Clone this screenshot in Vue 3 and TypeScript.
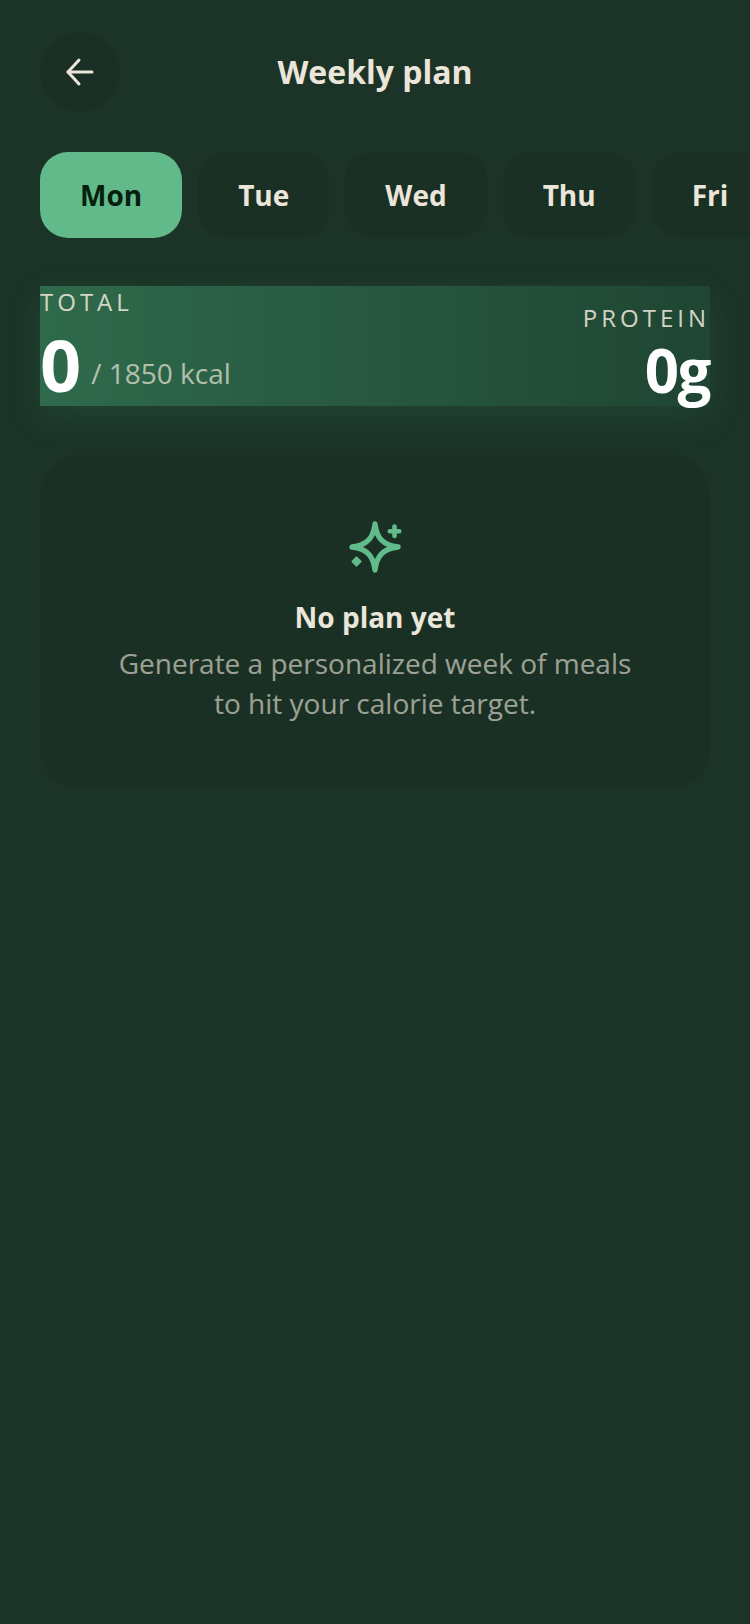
<template>
  <div class="page">
    <header class="top">
      <button class="back" aria-label="Back">
        <svg width="32" height="32" viewBox="0 0 32 32" fill="none" stroke="#ebe6d9" stroke-width="3" stroke-linecap="round" stroke-linejoin="round">
          <path d="M28 16H4" />
          <path d="M15 4 4 16l11 12" />
        </svg>
      </button>
      <h1>Weekly plan</h1>
    </header>

    <nav class="days">
      <button v-for="d in days" :key="d" class="day" :class="{ active: d === current }">{{ d }}</button>
    </nav>

    <section class="stats">
      <div>
        <div class="label">TOTAL</div>
        <div class="kcal"><b>{{ total }}</b><span>/ {{ target }} kcal</span></div>
      </div>
      <div class="right">
        <div class="label">PROTEIN</div>
        <b class="protein">{{ protein }}g</b>
      </div>
    </section>

    <section class="empty">
      <svg class="spark" width="56" height="56" viewBox="0 0 56 56" fill="none">
        <path d="M28 5C29.500 19 36 26.500 51 28 36 29.500 29.500 37 28 51 26.500 37 20 29.500 5 28 20 26.500 26.500 19 28 5Z" stroke="#62bb8b" stroke-width="5.400" stroke-linejoin="round" />
        <path d="M47.500 7.500v9.500M42.800 12.200h9.500" stroke="#62bb8b" stroke-width="4.600" stroke-linecap="round" />
        <path d="m9.500 38.500 4 4-4 4-4-4Z" fill="#62bb8b" stroke="#62bb8b" stroke-width="2" stroke-linejoin="round" />
      </svg>
      <h2>No plan yet</h2>
      <p>Generate a personalized week of meals<br />to hit your calorie target.</p>
    </section>
  </div>
</template>

<script setup lang="ts">
const days: string[] = ['Mon', 'Tue', 'Wed', 'Thu', 'Fri', 'Sat', 'Sun'];
const current = 'Mon';
const total = 0;
const target = 1850;
const protein = 0;
</script>

<style>
html, body { background: #1c3428; }
</style>

<style scoped>
.page {
  width: 750px;
  height: 1624px;
  overflow: hidden;
  background: #1c3428;
  color: #ebe6d9;
  font-family: "Open Sans", sans-serif;
  padding: 32px 40px 0;
  box-sizing: border-box;
}
.top {
  position: relative;
  display: flex;
  align-items: center;
  justify-content: center;
  height: 80px;
}
.back {
  position: absolute;
  left: 0;
  top: 0;
  width: 80px;
  height: 80px;
  border: none;
  border-radius: 50%;
  background: #1a3024;
  display: flex;
  align-items: center;
  justify-content: center;
  padding: 0;
}
h1 {
  margin: 0 0 2px;
  font-size: 32px;
  font-weight: 700;
}
.days {
  display: flex;
  gap: 16px;
  margin-top: 40px;
  width: 800px;
}
.day {
  flex: none;
  height: 86px;
  padding: 0 40px;
  border: none;
  border-radius: 28px;
  background: #1a3024;
  color: #ebe6d9;
  font: 700 28px "Open Sans", sans-serif;
}
.day.active {
  background: #62b98a;
  color: #06200f;
}
.stats {
  display: flex;
  justify-content: space-between;
  align-items: flex-start;
  height: 120px;
  margin-top: 48px;
  background: linear-gradient(90deg, #2f6a4c, #1f4533);
  box-shadow: 0 12px 32px rgba(62, 150, 100, 0.16);
}
.label {
  font-size: 24px;
  letter-spacing: 4px;
  line-height: 32px;
  color: #ebe6d9;
  opacity: 0.88;
}
.kcal {
  display: flex;
  align-items: flex-end;
  gap: 10px;
}
.kcal b {
  font-size: 72px;
  font-weight: 700;
  line-height: 92px;
  color: #fff;
}
.kcal span {
  font-size: 28px;
  line-height: 74px;
  color: #ebe6d9;
  opacity: 0.7;
}
.right {
  align-self: flex-end;
  text-align: right;
}
.protein {
  display: block;
  font-size: 60px;
  letter-spacing: -1.500px;
  line-height: 72px;
  color: #fff;
}
.empty {
  margin-top: 49px;
  height: 334px;
  box-sizing: border-box;
  padding-top: 64px;
  border-radius: 40px;
  background: #1a3024;
  text-align: center;
}
.spark {
  display: block;
  margin: 0 auto;
}
h2 {
  margin: 22px 0 0;
  font-size: 28px;
  font-weight: 700;
  line-height: 40px;
}
p {
  margin: 6px 0 0;
  font-size: 28px;
  line-height: 40px;
  color: #ebe6d9;
  opacity: 0.62;
}
</style>
